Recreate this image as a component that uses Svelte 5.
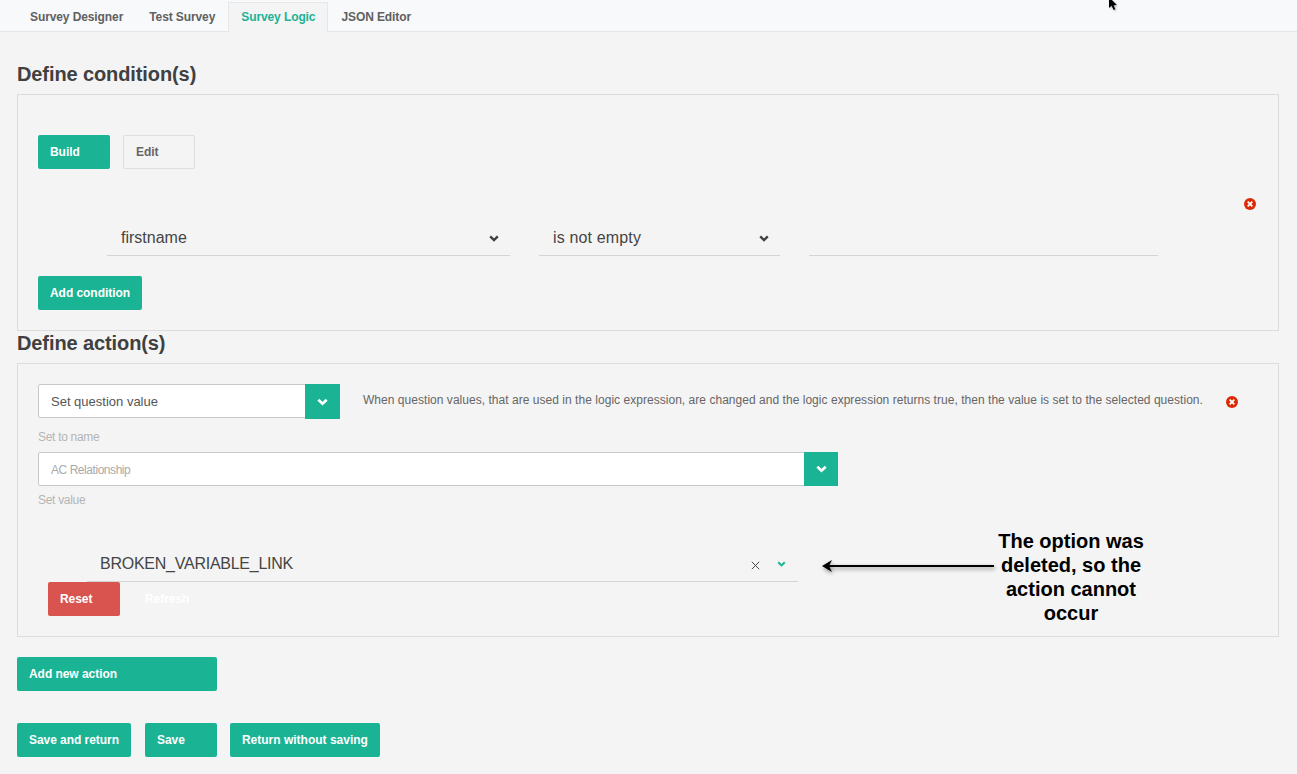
<script>
	const tabs = ["Survey Designer", "Test Survey", "Survey Logic", "JSON Editor"];
	const activeTab = "Survey Logic";
	const saveButtons = ["Save and return", "Save", "Return without saving"];
</script>

{#snippet chevron(cls)}
	<svg class="chev {cls}" viewBox="0 0 10 7"><path d="M1.2 1.4 5 5.1 8.8 1.4" /></svg>
{/snippet}

{#snippet removeIcon()}
	<svg class="remove" viewBox="0 0 12 12">
		<circle cx="6" cy="6" r="6" />
		<path d="M3.7 3.7 8.3 8.3M8.3 3.7 3.7 8.3" />
	</svg>
{/snippet}

<nav class="tabbar">
	{#each tabs as tab}
		<span class="tab" class:active={tab === activeTab}>{tab}</span>
	{/each}
	<svg class="cursor" viewBox="0 0 12 12">
		<path d="M1 -3 1 8 3.6 5.8 5.6 10 7.4 9.2 5.5 5.2 8.8 5z" />
	</svg>
</nav>

<main>
	<h2>Define condition(s)</h2>
	<section class="panel">
		<div class="mode">
			<button class="btn">Build</button>
			<button class="btn plain">Edit</button>
		</div>
		<div class="cond-remove">{@render removeIcon()}</div>
		<div class="cond-row">
			<div class="under first">firstname {@render chevron("dark")}</div>
			<div class="under second">is not empty {@render chevron("dark")}</div>
			<div class="under third"></div>
		</div>
		<button class="btn add-cond">Add condition</button>
	</section>

	<h2>Define action(s)</h2>
	<section class="panel actions">
		<div class="action-row">
			<div class="box type">
				<span>Set question value</span>
				<i class="drop">{@render chevron("light")}</i>
			</div>
			<p>When question values, that are used in the logic expression, are changed and the logic expression returns true, then the value is set to the selected question.</p>
			{@render removeIcon()}
		</div>
		<div class="label">Set to name</div>
		<div class="box name">
			<span>AC Relationship</span>
			<i class="drop">{@render chevron("light")}</i>
		</div>
		<div class="label value">Set value</div>
		<div class="under broken">
			BROKEN_VARIABLE_LINK
			<svg class="clear" viewBox="0 0 9 9"><path d="M.8.8 8.2 8.2M8.2.8.8 8.2" /></svg>
			{@render chevron("green")}
		</div>
		<div class="reset-row">
			<button class="btn red">Reset</button>
			<button class="btn ghost">Refresh</button>
		</div>

		<!-- annotation pasted over the screenshot -->
		<svg class="arrow" viewBox="0 0 180 20">
			<path d="M1 8 11 2 8.5 7 H173 V9 H8.5 L11 14z" />
		</svg>
		<div class="note">The option was deleted, so the action cannot occur</div>
	</section>

	<button class="btn wide">Add new action</button>

	<div class="save-row">
		{#each saveButtons as label}
			<button class="btn">{label}</button>
		{/each}
	</div>
</main>

<style>
	:global(body) {
		margin: 0;
		background: #f4f4f4;
		font-family: "Liberation Sans", Arial, sans-serif;
		color: #404040;
	}

	.tabbar {
		position: relative;
		display: flex;
		align-items: flex-end;
		height: 31px;
		padding-left: 17px;
		background: #f8f9fb;
		border-bottom: 1px solid #e3e5e7;
	}
	.tab {
		box-sizing: border-box;
		height: 29px;
		padding: 0 12px;
		border: 1px solid transparent;
		border-bottom: 0;
		line-height: 28px;
		font-size: 12px;
		font-weight: 700;
		letter-spacing: -0.1px;
		color: #606060;
	}
	.tab.active {
		height: 30px;
		margin-bottom: -1px;
		line-height: 28px;
		background: #f4f4f4;
		border-color: #e6e7e8;
		color: #1ab394;
	}
	.cursor {
		position: absolute;
		left: 1108px;
		top: 0;
		width: 12px;
		height: 12px;
		filter: drop-shadow(1px 1px 1px rgba(0, 0, 0, 0.3));
	}

	main {
		padding: 32px 18px 0 17px;
	}
	h2 {
		margin: 0 0 10px;
		font-size: 20px;
		line-height: 20px;
		font-weight: 700;
		letter-spacing: -0.1px;
		color: #404040;
	}
	.panel {
		position: relative;
		border: 1px solid #dcdcdc;
		padding: 40px 20px 20px;
		margin-bottom: 2px;
	}
	.panel.actions {
		padding-top: 20px;
		margin: 0 0 20px;
	}

	.btn {
		display: inline-block;
		box-sizing: border-box;
		min-width: 72px;
		height: 34px;
		padding: 0 12px;
		border: 0;
		border-radius: 2px;
		background: #1ab394;
		color: #fff;
		font: 700 12px/34px "Liberation Sans", Arial, sans-serif;
		letter-spacing: -0.05px;
		text-align: left;
	}
	.btn.plain {
		background: transparent;
		border: 1px solid #dedede;
		line-height: 32px;
		color: #666;
	}
	.btn.red {
		background: #d9534f;
	}
	.btn.ghost {
		background: transparent;
	}
	.btn.wide {
		display: block;
		width: 200px;
	}

	.mode {
		display: flex;
		gap: 13px;
	}
	.cond-remove {
		display: flex;
		justify-content: flex-end;
		height: 12px;
		margin: 29px 2px 0 0;
	}
	.remove {
		flex: none;
		width: 12px;
		height: 12px;
	}
	.remove circle {
		fill: #dc2a06;
	}
	.remove path {
		fill: none;
		stroke: #fff;
		stroke-width: 1.8;
	}

	.cond-row {
		display: flex;
		gap: 29px;
		margin: 10px 0 20px 69px;
	}
	.under {
		box-sizing: border-box;
		display: flex;
		align-items: center;
		height: 36px;
		padding: 1px 11px 0 14px;
		border-bottom: 1px solid #d4d4d4;
		font-size: 16px;
		color: #454545;
	}
	.under .chev {
		margin-left: auto;
	}
	.first {
		width: 403px;
	}
	.second {
		width: 241px;
		letter-spacing: 0.15px;
	}
	.third {
		width: 349px;
	}
	.add-cond {
		display: block;
	}

	.chev {
		flex: none;
		width: 10px;
		height: 7px;
	}
	.chev path {
		fill: none;
		stroke-width: 2.4;
	}
	.chev.dark path {
		stroke: #404040;
	}
	.chev.light {
		width: 11px;
		height: 8px;
	}
	.chev.light path {
		stroke: #fff;
	}
	.chev.green path {
		stroke: #1ab394;
	}

	.action-row {
		display: flex;
		align-items: center;
		height: 35px;
	}
	.action-row p {
		margin: 0 23px 3px 23px;
		font-size: 12px;
		color: #666;
		white-space: nowrap;
		letter-spacing: 0.034px;
	}
	.action-row .remove {
		margin-top: 1px;
	}

	.box {
		position: relative;
		box-sizing: border-box;
		display: flex;
		align-items: center;
		flex: none;
		height: 34px;
		padding-left: 12px;
		background: #fff;
		border: 1px solid #c8c8c8;
		border-radius: 2px;
	}
	.type {
		width: 302px;
		align-self: flex-start;
		font-size: 13px;
		color: #555;
	}
	.name {
		width: 800px;
		padding-top: 1px;
		font-size: 12px;
		letter-spacing: -0.45px;
		color: #aaa;
	}
	.drop {
		position: absolute;
		top: -1px;
		right: -1px;
		display: flex;
		align-items: center;
		justify-content: center;
		width: 35px;
		height: 35px;
		background: #1ab394;
	}
	.name .drop {
		width: 34px;
		height: 34px;
	}
	.label {
		margin: 10px 0 6px;
		height: 17px;
		font-size: 12px;
		line-height: 17px;
		letter-spacing: -0.3px;
		color: #b4b4b4;
	}
	.label.value {
		margin: 6px 0 0;
	}

	.broken {
		width: 711px;
		height: 37px;
		margin: 36px 0 0 49px;
		padding: 1px 0 0 13px;
		letter-spacing: -0.25px;
	}
	.clear {
		flex: none;
		width: 9px;
		height: 9px;
		margin: 4px 0 0 auto;
	}
	.clear path {
		fill: none;
		stroke: #444;
		stroke-width: 1;
	}
	.broken .chev.green {
		margin: 1px 12px 0 17px;
		width: 9px;
		height: 6px;
	}
	.reset-row {
		display: flex;
		gap: 13px;
		margin-left: 10px;
	}

	.arrow {
		position: absolute;
		left: 803px;
		top: 194px;
		width: 180px;
		height: 20px;
		fill: #000;
		filter: drop-shadow(1px 2px 2px rgba(0, 0, 0, 0.45));
	}
	.note {
		position: absolute;
		left: 973px;
		top: 165px;
		width: 160px;
		text-align: center;
		font-size: 20px;
		line-height: 24px;
		font-weight: 700;
		color: #000;
	}

	.save-row {
		display: flex;
		gap: 13px;
		margin-top: 32px;
	}
	.save-row .btn:first-child {
		margin-right: 1px;
	}
	.save-row .btn:last-child {
		letter-spacing: 0;
	}
</style>
